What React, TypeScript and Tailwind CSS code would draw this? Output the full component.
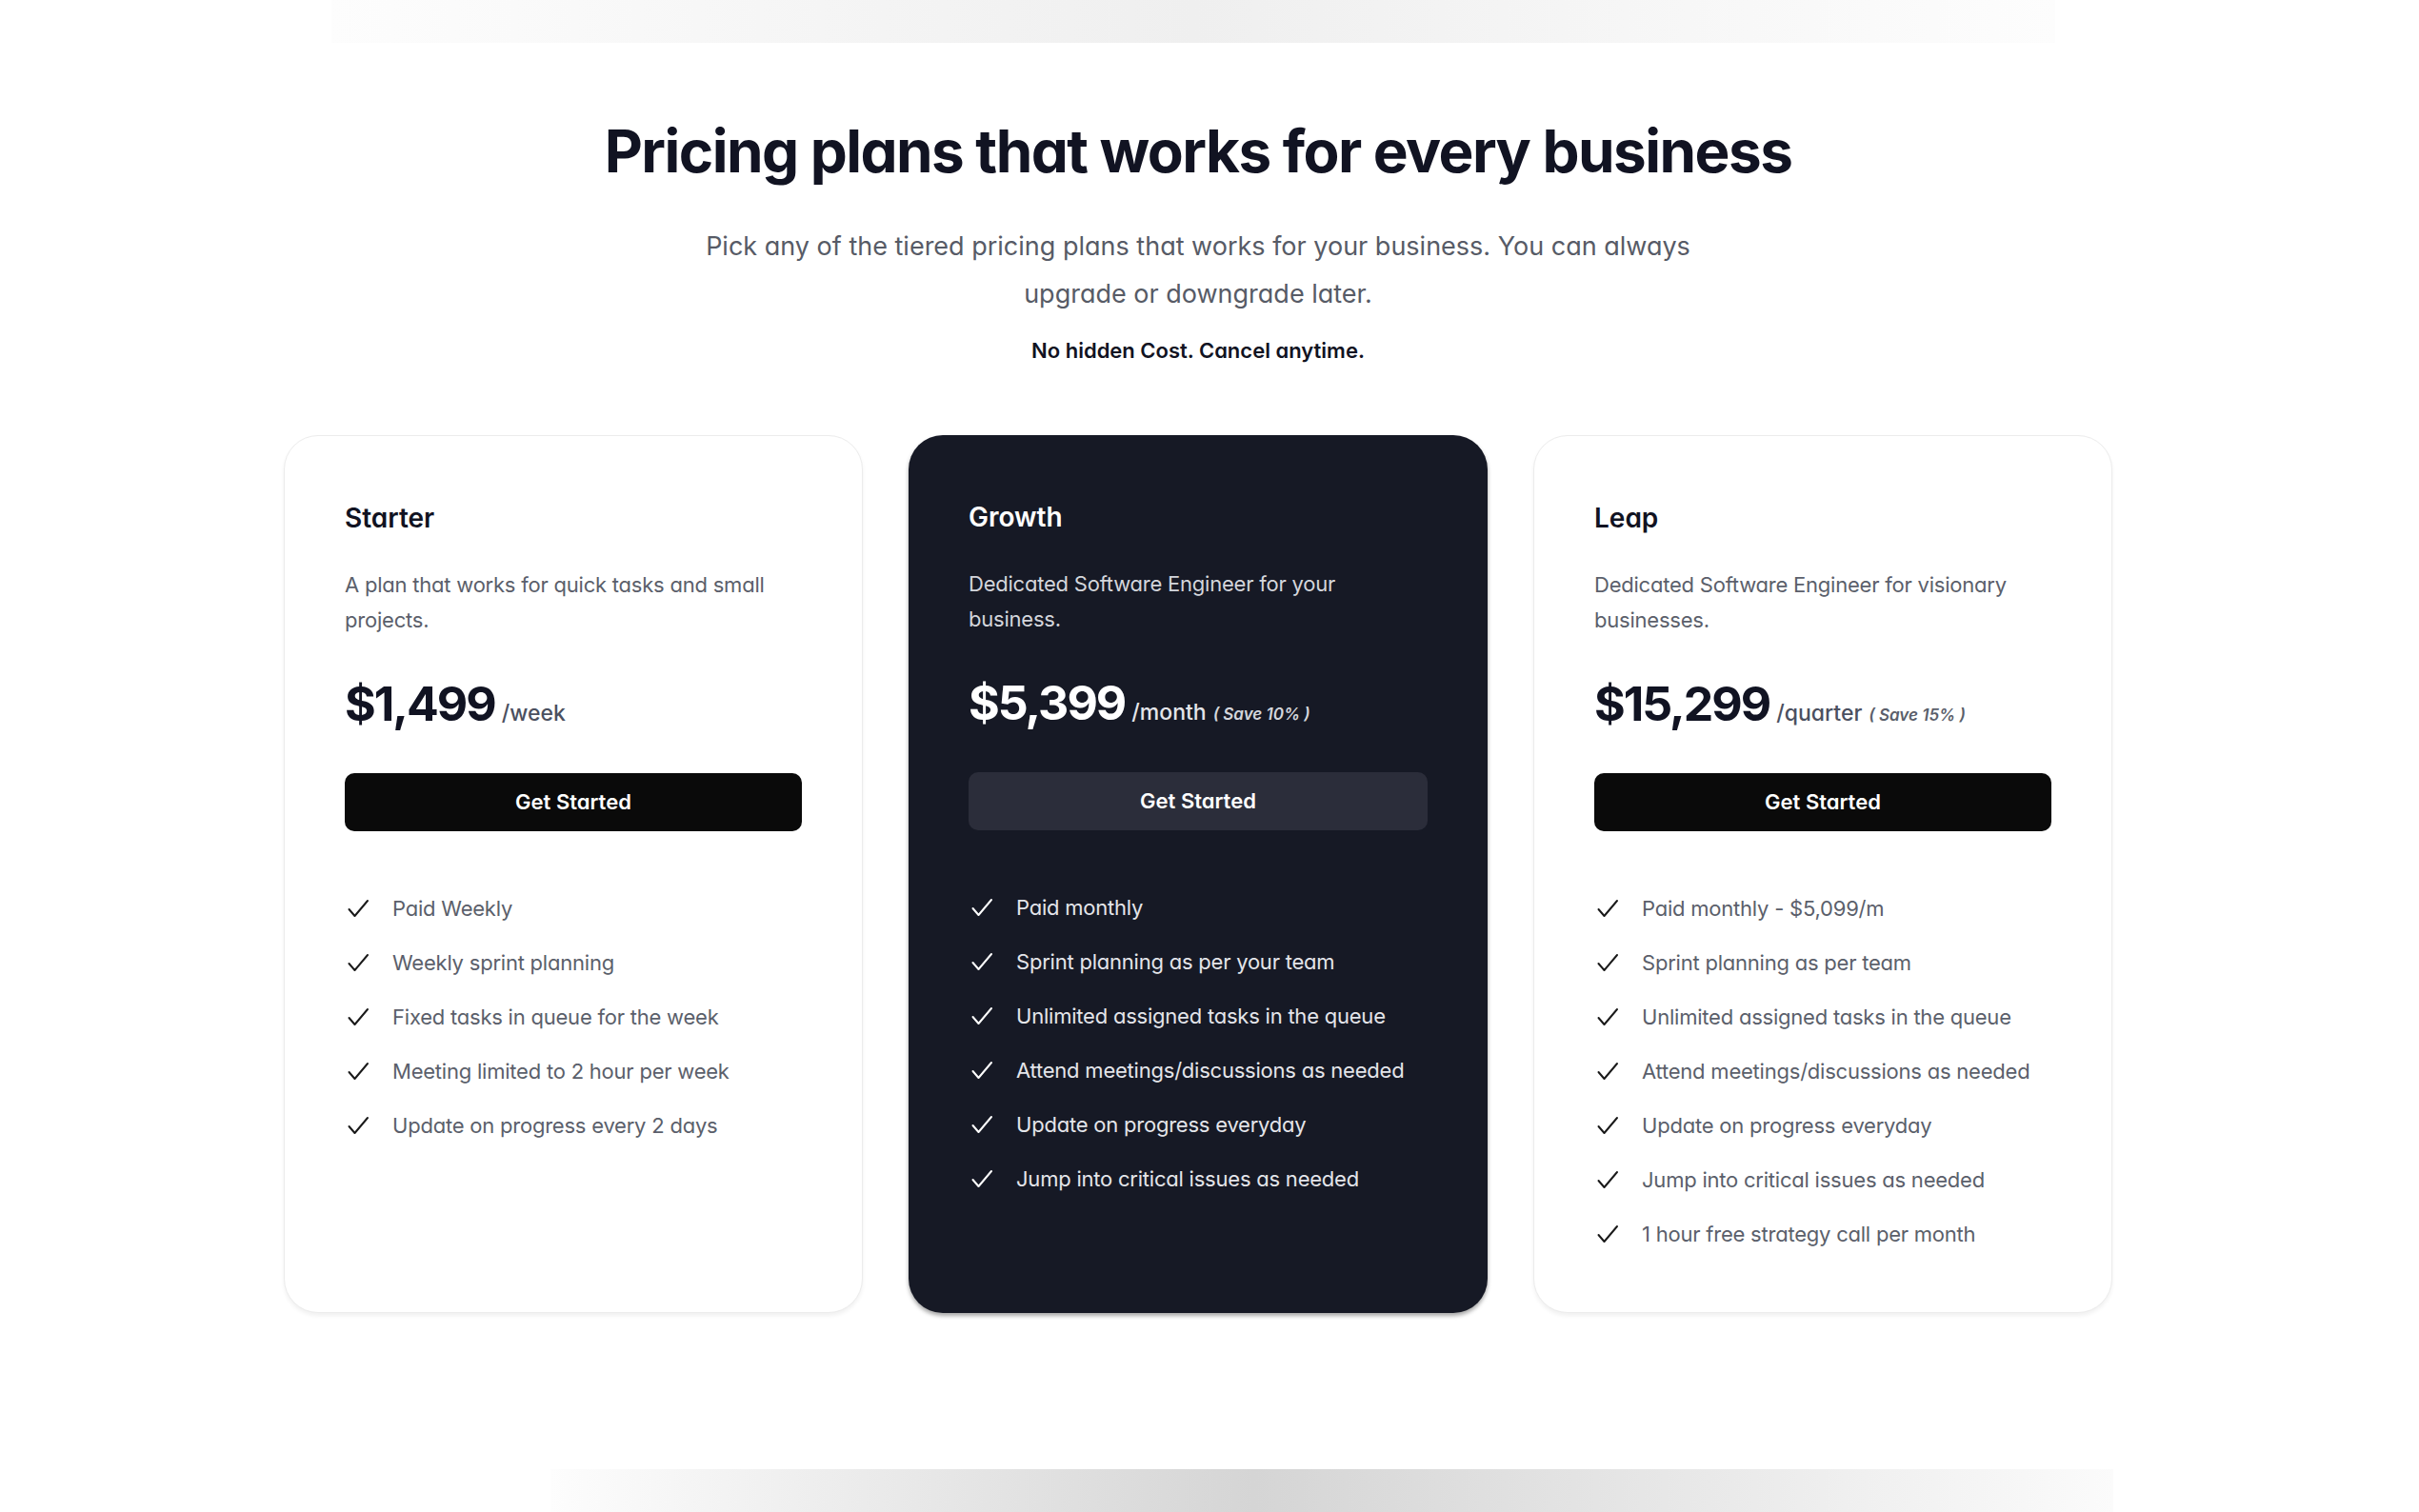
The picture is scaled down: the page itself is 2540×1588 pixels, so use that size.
import { Check } from "lucide-react";

type Plan = {
  name: string;
  description: string;
  price: string;
  period: string;
  save?: string;
  features: string[];
  featured?: boolean;
};

const plans: Plan[] = [
  {
    name: "Starter",
    description: "A plan that works for quick tasks and small projects.",
    price: "$1,499",
    period: "/week",
    features: [
      "Paid Weekly",
      "Weekly sprint planning",
      "Fixed tasks in queue for the week",
      "Meeting limited to 2 hour per week",
      "Update on progress every 2 days",
    ],
  },
  {
    name: "Growth",
    description: "Dedicated Software Engineer for your business.",
    price: "$5,399",
    period: "/month",
    save: "( Save 10% )",
    featured: true,
    features: [
      "Paid monthly",
      "Sprint planning as per your team",
      "Unlimited assigned tasks in the queue",
      "Attend meetings/discussions as needed",
      "Update on progress everyday",
      "Jump into critical issues as needed",
    ],
  },
  {
    name: "Leap",
    description: "Dedicated Software Engineer for visionary businesses.",
    price: "$15,299",
    period: "/quarter",
    save: "( Save 15% )",
    features: [
      "Paid monthly - $5,099/m",
      "Sprint planning as per team",
      "Unlimited assigned tasks in the queue",
      "Attend meetings/discussions as needed",
      "Update on progress everyday",
      "Jump into critical issues as needed",
      "1 hour free strategy call per month",
    ],
  },
];

function CheckMark({ light }: { light?: boolean }) {
  return (
    <svg
      viewBox="0 0 24 20"
      className={`w-[24px] h-[20px] shrink-0 ${light ? "text-white" : "text-[#1a1a1a]"}`}
      fill="none"
      stroke="currentColor"
      strokeWidth={2}
      strokeLinecap="round"
      strokeLinejoin="round"
    >
      <path d="M2.5 11 L8.5 18 L22 2" />
    </svg>
  );
}

function PlanCard({ plan }: { plan: Plan }) {
  const dark = plan.featured;
  return (
    <div
      className={`flex flex-col rounded-[36px] px-[63px] pt-[68px] pb-[66px] ${
        dark
          ? "bg-[#161925] shadow-[0_3px_4px_rgba(0,0,0,0.35)]"
          : "bg-white border border-[#ececec] shadow-[0_3px_4px_rgba(0,0,0,0.06)]"
      }`}
    >
      <h3 className={`text-[28px] leading-[36px] font-semibold ${dark ? "text-white" : "text-[#111322]"}`}>
        {plan.name}
      </h3>
      <p
        className={`mt-[34px] text-[22px] leading-[37px] tracking-[-0.01em] ${
          dark ? "text-[#d4d6dc]" : "text-[#5b5f6b]"
        }`}
      >
        {plan.description}
      </p>
      <div className="mt-[39px] flex items-baseline gap-[7px]">
        <span
          className={`text-[50px] leading-[60px] font-bold tracking-[-0.04em] ${
            dark ? "text-white" : "text-[#111322]"
          }`}
        >
          {plan.price}
        </span>
        <span className={`text-[23px] font-medium ${dark ? "text-[#e4e5ea]" : "text-[#4b5060]"}`}>{plan.period}</span>
        {plan.save && (
          <span className={`text-[17px] italic font-semibold ${dark ? "text-[#d4d6dc]" : "text-[#5b5f6b]"}`}>
            {plan.save}
          </span>
        )}
      </div>
      <button
        className={`mt-[43px] h-[61px] w-full rounded-[10px] text-[22px] font-semibold text-white ${
          dark ? "bg-[#2b2d3a]" : "bg-[#0a0a0a]"
        }`}
      >
        Get Started
      </button>
      <ul className="mt-[65px] flex flex-col gap-[25px]">
        {plan.features.map((f) => (
          <li key={f} className="flex items-center gap-[24px] pl-[2px]">
            <CheckMark light={dark} />
            <span
              className={`text-[22px] leading-[32px] tracking-[-0.01em] ${
                dark ? "text-[#e4e5ea]" : "text-[#5b5f6b]"
              }`}
            >
              {f}
            </span>
          </li>
        ))}
      </ul>
    </div>
  );
}

export default function App() {
  return (
    <div className="min-h-screen bg-white font-['Inter','Liberation_Sans',sans-serif] [font-feature-settings:'cv11'] overflow-hidden">
      {/* faded strip from the section above */}
      <div className="ml-[348px] w-[1810px] h-[45px] bg-gradient-to-r from-[#fdfdfd] via-[#efefef] to-[#fdfdfd]" />

      <section className="ml-[298px] w-[1920px] pt-[80px] pb-[164px]">
        <div className="text-center">
          <h2 className="text-[62px] leading-[68px] font-bold tracking-[-0.025em] text-[#111322]">
            Pricing plans that works for every business
          </h2>
          <p className="mx-auto mt-[41px] max-w-[1080px] text-[27px] leading-[50px] text-[#575b66]">
            Pick any of the tiered pricing plans that works for your business. You can always upgrade or downgrade later.
          </p>
          <p className="mt-[18px] text-[22px] leading-[32px] font-semibold text-[#111322]">
            No hidden Cost. Cancel anytime.
          </p>
        </div>

        <div className="mt-[73px] grid grid-cols-3 gap-[48px]">
          {plans.map((p) => (
            <PlanCard key={p.name} plan={p} />
          ))}
        </div>
      </section>

      {/* faded strip from the section below */}
      <div className="ml-[578px] w-[1641px] h-[45px] bg-gradient-to-r from-[#fdfdfd] via-[#d5d5d5] via-45% to-[#fbfbfb]" />
    </div>
  );
}
